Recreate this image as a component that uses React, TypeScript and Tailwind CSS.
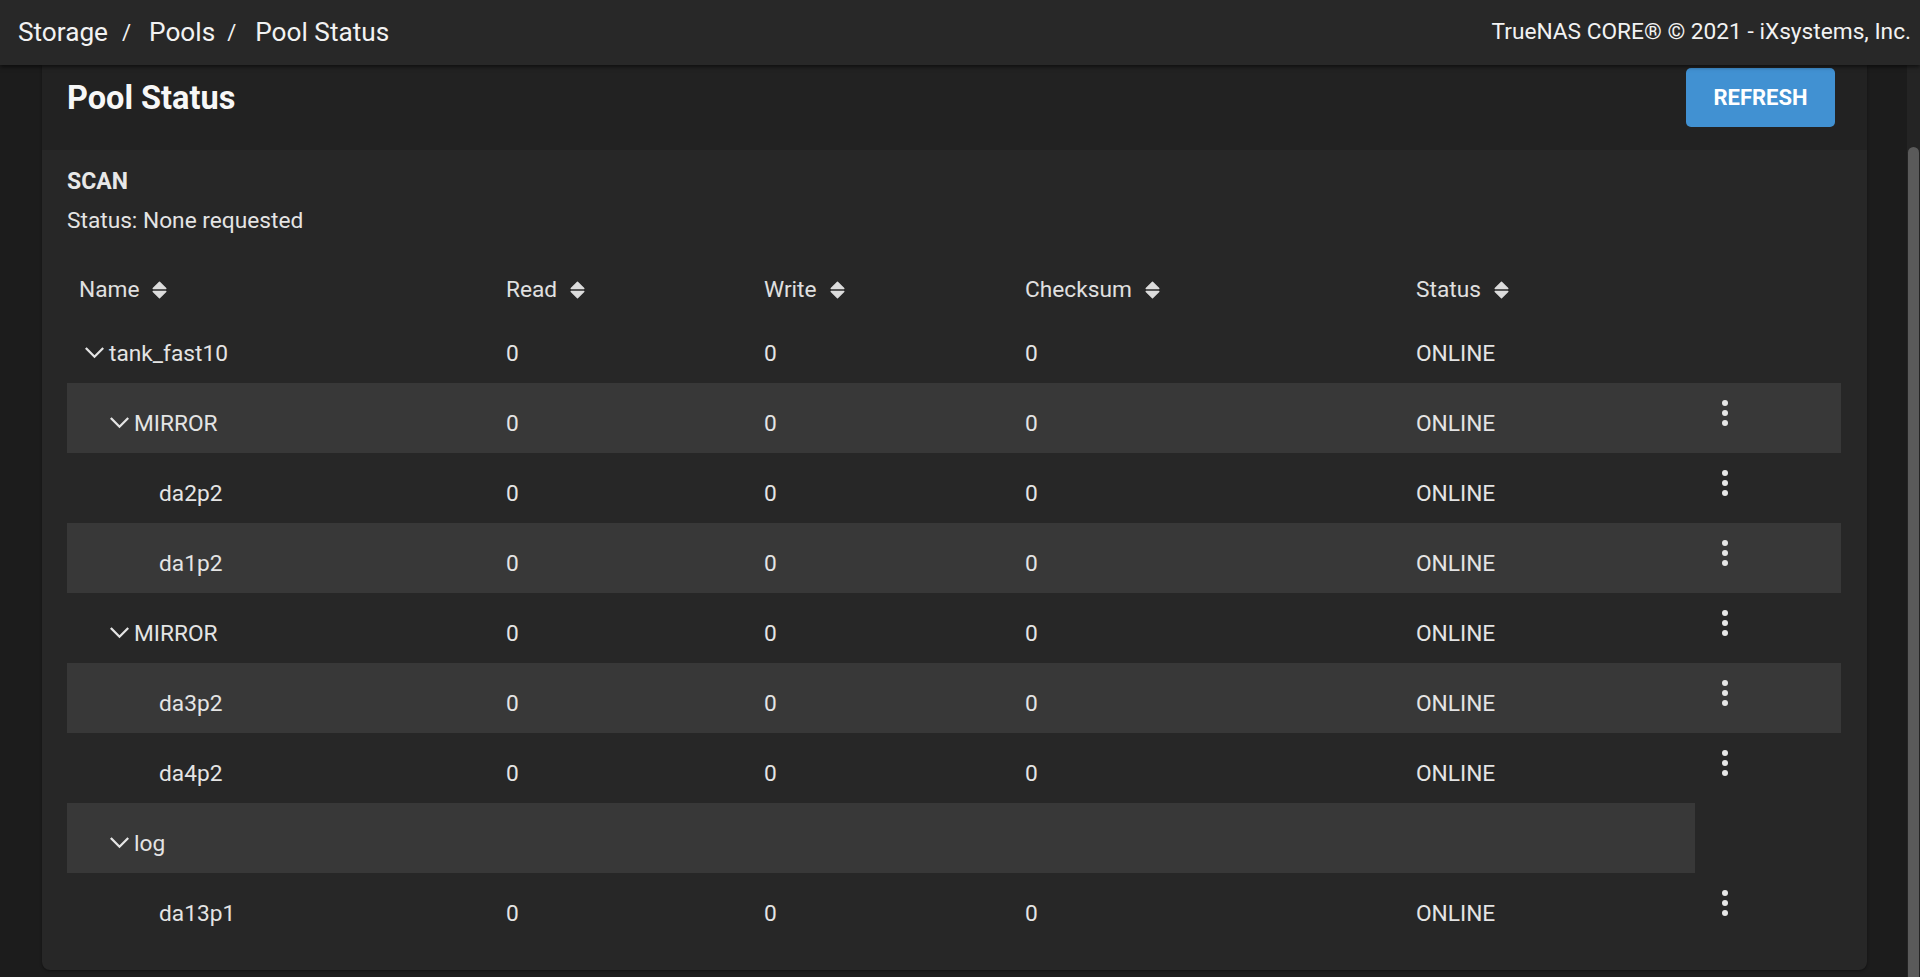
import { FC } from 'react'

type Row = {
  name: string
  level: number
  expandable?: boolean
  stats?: boolean
  actions?: boolean
}

const ROWS: Row[] = [
  { name: 'tank_fast10', level: 0, expandable: true, stats: true },
  { name: 'MIRROR', level: 1, expandable: true, stats: true, actions: true },
  { name: 'da2p2', level: 2, stats: true, actions: true },
  { name: 'da1p2', level: 2, stats: true, actions: true },
  { name: 'MIRROR', level: 1, expandable: true, stats: true, actions: true },
  { name: 'da3p2', level: 2, stats: true, actions: true },
  { name: 'da4p2', level: 2, stats: true, actions: true },
  { name: 'log', level: 1, expandable: true },
  { name: 'da13p1', level: 2, stats: true, actions: true },
]

const GRID = 'grid grid-cols-[427px_258px_261px_391px_291px_146px]'

const SortIcon: FC = () => (
  <svg width="15" height="18" viewBox="0 0 15 18" className="ml-[13px] shrink-0 text-[#dcdcdc]">
    <polygon points="1.2,7.6 7.5,1.2 13.8,7.6" fill="currentColor" stroke="currentColor" strokeWidth="1.4" strokeLinejoin="round" />
    <polygon points="1.2,10.4 13.8,10.4 7.5,16.8" fill="currentColor" stroke="currentColor" strokeWidth="1.4" strokeLinejoin="round" />
  </svg>
)

const Chevron: FC = () => (
  <svg width="19" height="12" viewBox="0 0 19 12" className="mt-[-2px] shrink-0">
    <polyline points="1.6,1.8 9.5,9.7 17.4,1.8" fill="none" stroke="#e4e4e4" strokeWidth="2.3" strokeLinecap="square" />
  </svg>
)

const Kebab: FC = () => (
  <div className="flex flex-col gap-[4px] pl-[27px]">
    <span className="h-[6px] w-[6px] rounded-full bg-[#e6e6e6]" />
    <span className="h-[6px] w-[6px] rounded-full bg-[#e6e6e6]" />
    <span className="h-[6px] w-[6px] rounded-full bg-[#e6e6e6]" />
  </div>
)

const HeaderCell: FC<{ label: string }> = ({ label }) => (
  <div className="flex items-center pl-[12px]">
    <span>{label}</span>
    <SortIcon />
  </div>
)

const TableRow: FC<{ row: Row; striped: boolean }> = ({ row, striped }) => {
  const bg = striped ? 'bg-[#383838]' : ''
  return (
    <div className={`${GRID} h-[70px]`}>
      <div className={`flex items-center pl-[18px] pt-[12px] ${bg}`}>
        <div className="flex items-center" style={{ paddingLeft: row.level * 25 }}>
          {row.expandable ? <Chevron /> : <span className="w-[19px] shrink-0" />}
          <span className="ml-[5px]">{row.name}</span>
        </div>
      </div>
      <div className={`flex items-center pl-[12px] pt-[12px] ${bg}`}>{row.stats ? '0' : ''}</div>
      <div className={`flex items-center pl-[12px] pt-[12px] ${bg}`}>{row.stats ? '0' : ''}</div>
      <div className={`flex items-center pl-[12px] pt-[12px] ${bg}`}>{row.stats ? '0' : ''}</div>
      <div className={`flex items-center pl-[12px] pt-[12px] ${bg}`}>{row.stats ? 'ONLINE' : ''}</div>
      {row.actions ? (
        <div className={`pt-[17px] ${bg}`}>
          <Kebab />
        </div>
      ) : (
        <div />
      )}
    </div>
  )
}

export default function App() {
  return (
    <div className="flex h-[977px] w-full flex-col overflow-hidden bg-[#1c1c1c] text-[22.7px] text-[#e4e4e4] [font-family:Roboto,'Liberation_Sans',sans-serif]">
      <header className="relative z-10 flex h-[65px] shrink-0 items-center justify-between bg-[#282828] pl-[18px] pr-[9px] shadow-[0_2px_4px_rgba(0,0,0,0.55)]">
        <nav className="flex items-center text-[26.2px] text-[#f2f2f2]">
          <span>Storage</span>
          <span className="ml-[14px] mr-[18px] text-[22px]">/</span>
          <span>Pools</span>
          <span className="ml-[12px] mr-[19px] text-[22px]">/</span>
          <span>Pool Status</span>
        </nav>
        <div className="text-[22.7px] text-[#f2f2f2]">TrueNAS CORE® © 2021 - iXsystems, Inc.</div>
      </header>

      <div className="flex min-h-0 flex-1">
        <main className="flex-1 pb-[7px] pl-[42px] pr-[40px]">
          <section className="flex h-full flex-col overflow-hidden rounded-b-[8px] bg-[#272727] shadow-[0_1px_3px_rgba(0,0,0,0.4)]">
            <div className="flex items-center justify-between bg-[#222222] pb-[23px] pl-[25px] pr-[32px] pt-[3px]">
              <h1 className="pt-[2px] text-[32.5px] font-bold text-[#f7f7f7]">Pool Status</h1>
              <button className="h-[59px] w-[149px] rounded-[5px] bg-[#4191d2] text-[22px] font-bold text-white">
                REFRESH
              </button>
            </div>

            <div className="px-[25px] pt-[19px]">
              <div className="text-[23px] font-bold leading-[26px] text-[#e8e8e8]">SCAN</div>
              <div className="mt-[13px] leading-[26px]">Status: None requested</div>

              <div className="mt-[33px]">
                <div className={`${GRID} h-[46px] text-[#e0e0e0]`}>
                  <HeaderCell label="Name" />
                  <HeaderCell label="Read" />
                  <HeaderCell label="Write" />
                  <HeaderCell label="Checksum" />
                  <HeaderCell label="Status" />
                  <div />
                </div>
                {ROWS.map((row, i) => (
                  <TableRow key={i} row={row} striped={i % 2 === 1} />
                ))}
              </div>
            </div>
          </section>
        </main>

        <div className="w-[13px] shrink-0 bg-[#242424] pl-[1px] pt-[82px]">
          <div className="h-full w-[11px] rounded-t-full bg-[#5a5a5a]" />
        </div>
      </div>
    </div>
  )
}
